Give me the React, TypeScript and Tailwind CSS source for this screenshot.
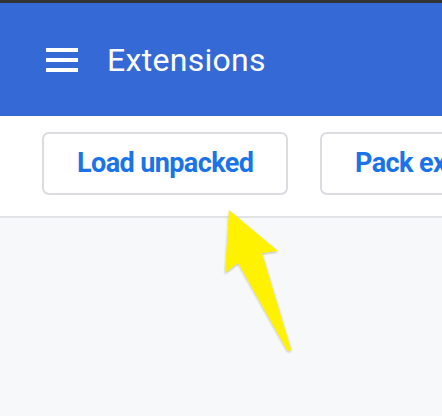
import React from 'react';

const Hamburger: React.FC = () => (
  <div className="flex flex-col gap-[6px] w-[32px]">
    <span className="block h-[4px] bg-white" />
    <span className="block h-[4px] bg-white" />
    <span className="block h-[4px] bg-white" />
  </div>
);

const ToolbarButton: React.FC<{ label: string; width: string }> = ({ label, width }) => (
  <button
    className={`${width} h-[63px] shrink-0 rounded-[7px] border-2 border-[#dadce0] bg-white text-[27px] font-bold tracking-[-0.6px] text-[#1a73e8] text-left whitespace-nowrap`}
  >
    {label}
  </button>
);

const App: React.FC = () => {
  return (
    <div
      className="relative w-[442px] h-[416px] overflow-hidden bg-[#f7f8fa]"
      style={{ fontFamily: 'Roboto, "Liberation Sans", sans-serif' }}
    >
      <div className="h-[3px] bg-[#333436]" />
      <header className="h-[113px] bg-[#3469d6] flex items-center pl-[46px]">
        <Hamburger />
        <h1 className="ml-[29px] text-[32px] text-white leading-none tracking-[0.3px]">Extensions</h1>
      </header>
      <div className="h-[102px] bg-white border-b-2 border-[#e1e3e6] flex items-start pt-[16px] pl-[42px] gap-[32px]">
        <ToolbarButton label="Load unpacked" width="w-[246px] pl-[33px]" />
        <ToolbarButton label="Pack extension" width="w-[260px] pl-[33px]" />
      </div>

      {/* yellow pointer arrow */}
      <svg className="absolute left-0 top-0" width="442" height="416" viewBox="0 0 442 416">
        <defs>
          <filter id="sh" x="-20%" y="-20%" width="140%" height="140%">
            <feDropShadow dx="0" dy="1" stdDeviation="1" floodColor="#000" floodOpacity="0.3" />
          </filter>
        </defs>
        <path
          d="M229 210 L278 251 L262 253 L291 349 Q290 353 287 350 L238 263 L225 273 Z"
          fill="#fff200"
          strokeLinejoin="round"
          filter="url(#sh)"
        />
      </svg>
    </div>
  );
};

export default App;
